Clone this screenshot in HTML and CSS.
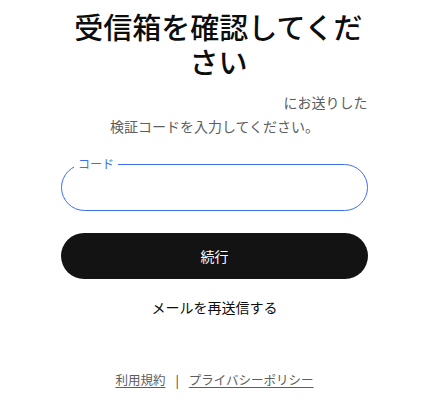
FILE: index.html
```html
<!DOCTYPE html>
<html lang="ja">
<head>
<meta charset="utf-8">
<link rel="stylesheet" href="styles.css">
</head>
<body>
<main class="card">
  <h1 class="title">受信箱を確認してください</h1>
  <p class="subtitle"><span class="email"></span>にお送りした検証コードを入力してください。</p>
  <div class="field">
    <span class="field-label">コード</span>
    <input class="field-input" type="text">
  </div>
  <button class="primary">続行</button>
  <button class="link">メールを再送信する</button>
  <footer class="footer">
    <a class="footer-link" href="#">利用規約</a>
    <span class="sep">|</span>
    <a class="footer-link" href="#">プライバシーポリシー</a>
  </footer>
</main>
</body>
</html>
```
FILE: styles.css
```css
html, body {
  margin: 0;
  padding: 0;
  background: #fff;
}
body {
  font-family: "Noto Sans CJK JP", "Noto Sans", sans-serif;
  color: #0d0d0d;
}
.card {
  width: 307px;
  margin: 0 0 0 61px;
  padding-top: 9px;
  display: flex;
  flex-direction: column;
}
.title {
  margin: 0;
  padding: 0 0 0 8px;
  font-size: 29px;
  line-height: 35px;
  font-weight: 500;
  text-align: center;
}
.subtitle {
  margin: 11px 0 0;
  font-size: 14px;
  line-height: 24px;
  color: #5d5d5d;
  text-align: center;
}
.email {
  display: inline-block;
  width: 222px;
  height: 1px;
}
.field {
  position: relative;
  margin-top: 26px;
}
.field-label {
  position: absolute;
  left: 13px;
  top: -8px;
  padding: 0 4px;
  background: #fff;
  font-size: 12px;
  line-height: 16px;
  color: #3d6df5;
}
.field-input {
  display: block;
  box-sizing: border-box;
  width: 100%;
  height: 47px;
  margin: 0;
  border: 1px solid #3d6df5;
  border-radius: 24px;
  outline: none;
  padding: 0 20px;
  font: inherit;
}
.primary {
  margin-top: 22px;
  height: 46px;
  border: none;
  border-radius: 23px;
  background: #131313;
  color: #fff;
  font-family: inherit;
  font-size: 14px;
  padding: 0;
}
.link {
  margin-top: 18px;
  border: none;
  background: none;
  padding: 0;
  font-family: inherit;
  font-size: 14px;
  line-height: 20px;
  color: #0d0d0d;
}
.footer {
  margin-top: 54px;
  display: flex;
  justify-content: center;
  align-items: center;
  gap: 10px;
  font-size: 12.5px;
  line-height: 18px;
  color: #5d5d5d;
}
.footer-link {
  color: #5d5d5d;
  text-decoration: underline;
  text-underline-offset: 2px;
}
.sep {
  color: #333;
}
```
